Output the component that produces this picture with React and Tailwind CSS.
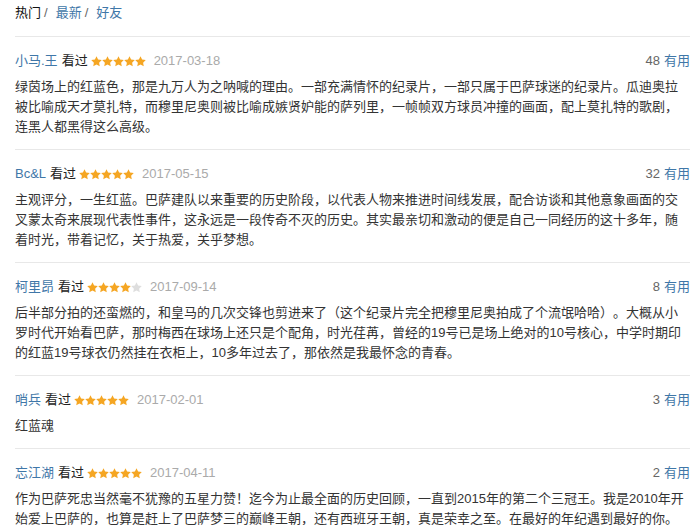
import React from "react";

const reviews = [
  {
    name: "小马.王",
    stars: 5,
    date: "2017-03-18",
    votes: 48,
    text: "绿茵场上的红蓝色，那是九万人为之呐喊的理由。一部充满情怀的纪录片，一部只属于巴萨球迷的纪录片。瓜迪奥拉被比喻成天才莫扎特，而穆里尼奥则被比喻成嫉贤妒能的萨列里，一帧帧双方球员冲撞的画面，配上莫扎特的歌剧，连黑人都黑得这么高级。",
  },
  {
    name: "Bc&L",
    stars: 5,
    date: "2017-05-15",
    votes: 32,
    text: "主观评分，一生红蓝。巴萨建队以来重要的历史阶段，以代表人物来推进时间线发展，配合访谈和其他意象画面的交叉蒙太奇来展现代表性事件，这永远是一段传奇不灭的历史。其实最亲切和激动的便是自己一同经历的这十多年，随着时光，带着记忆，关于热爱，关乎梦想。",
  },
  {
    name: "柯里昂",
    stars: 4,
    date: "2017-09-14",
    votes: 8,
    text: "后半部分拍的还蛮燃的，和皇马的几次交锋也剪进来了（这个纪录片完全把穆里尼奥拍成了个流氓哈哈）。大概从小罗时代开始看巴萨，那时梅西在球场上还只是个配角，时光荏苒，曾经的19号已是场上绝对的10号核心，中学时期印的红蓝19号球衣仍然挂在衣柜上，10多年过去了，那依然是我最怀念的青春。",
  },
  {
    name: "哨兵",
    stars: 5,
    date: "2017-02-01",
    votes: 3,
    text: "红蓝魂",
  },
  {
    name: "忘江湖",
    stars: 5,
    date: "2017-04-11",
    votes: 2,
    text: "作为巴萨死忠当然毫不犹豫的五星力赞！迄今为止最全面的历史回顾，一直到2015年的第二个三冠王。我是2010年开始爱上巴萨的，也算是赶上了巴萨梦三的巅峰王朝，还有西班牙王朝，真是荣幸之至。在最好的年纪遇到最好的你。",
  },
];

function Star({ filled }) {
  return (
    <svg width="11" height="11" viewBox="0 0 24 24" className="block">
      <path
        d="M12 0.5l3.5 7.3 8 1.1-5.8 5.6 1.4 8L12 18.7l-7.1 3.8 1.4-8L0.5 8.9l8-1.1z"
        fill={filled ? "#f5a623" : "#dedede"}
      />
    </svg>
  );
}

function Review({ r }) {
  return (
    <div className="border-b border-[#e8e8e8] pt-[14px] pb-[12px]">
      <div className="flex items-center justify-between h-[20px] leading-[20px]">
        <div className="flex items-center">
          <span className="text-[#3f77a8]">{r.name}</span>
          <span className="ml-[4px] text-[#222]">看过</span>
          <span className="ml-[3px] flex items-center">
            {[0, 1, 2, 3, 4].map((i) => (
              <Star key={i} filled={i < r.stars} />
            ))}
          </span>
          <span className="ml-[8px] text-[#aaa]">{r.date}</span>
        </div>
        <div>
          <span className="text-[#666]">{r.votes}</span>
          <span className="ml-[4px] text-[#3f77a8]">有用</span>
        </div>
      </div>
      <p className="mt-[6px] leading-[20px] text-[#333] [text-spacing-trim:space-all]">{r.text}</p>
    </div>
  );
}

export default function App() {
  return (
    <div
      className="w-[700px] h-[525px] overflow-hidden bg-white pl-[15px] pr-[10px] text-[13px]"
      style={{ fontFamily: '"Liberation Sans", "Noto Sans CJK SC", sans-serif' }}
    >
      <div className="h-[37px] pt-[3px] leading-[20px] border-b border-[#e8e8e8]">
        <span className="text-[#111]">热门</span>
        <span className="ml-[3px] text-[#666]">/</span>
        <span className="ml-[8px] text-[#3f77a8]">最新</span>
        <span className="ml-[3px] text-[#666]">/</span>
        <span className="ml-[8px] text-[#3f77a8]">好友</span>
      </div>
      {reviews.map((r, i) => (
        <Review key={i} r={r} />
      ))}
    </div>
  );
}
